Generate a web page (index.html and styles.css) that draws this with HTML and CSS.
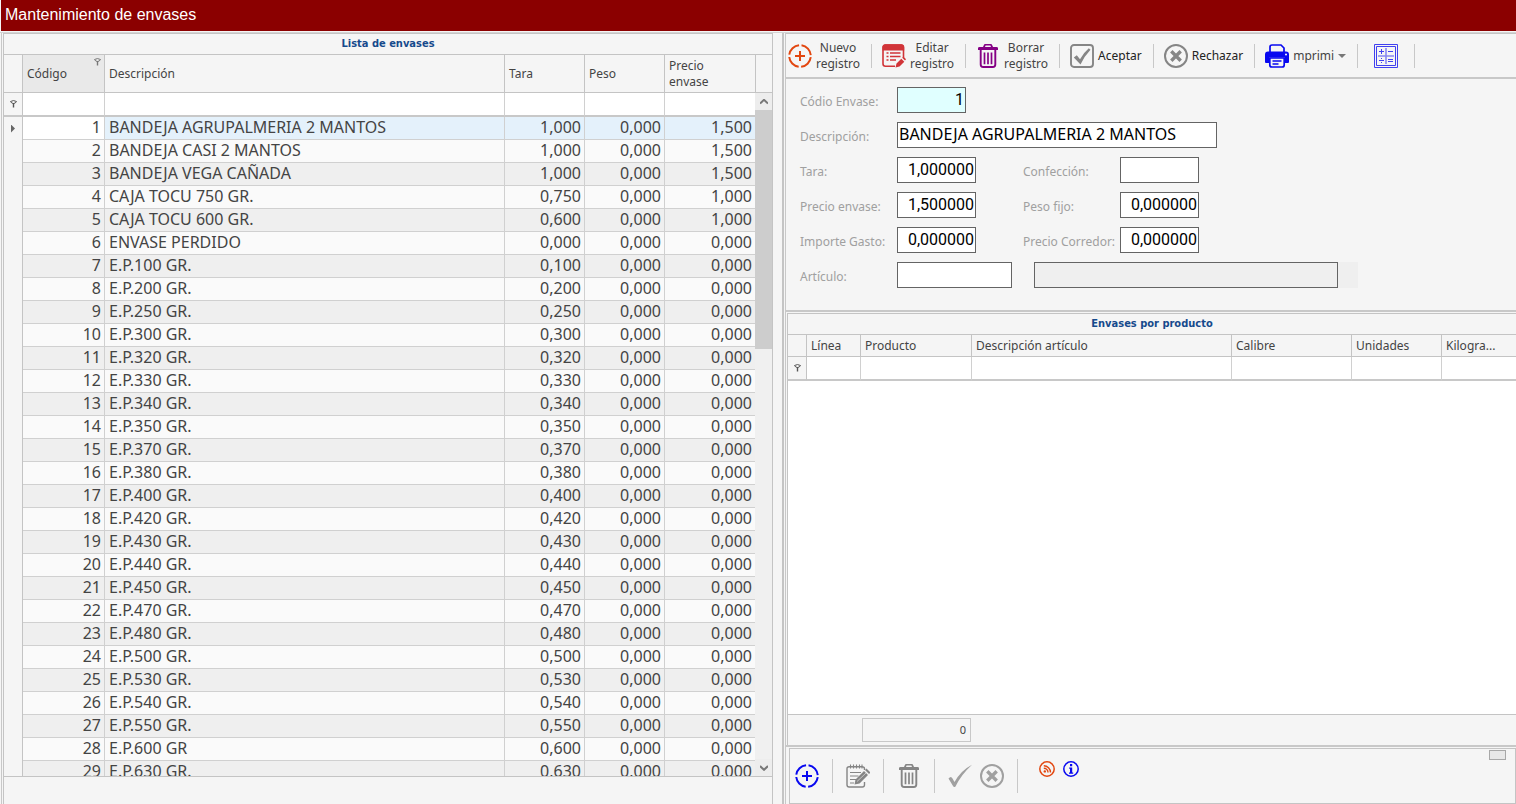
FILE: index.html
```html
<!DOCTYPE html>
<html lang="es">
<head>
<meta charset="utf-8">
<title>Mantenimiento de envases</title>
<link rel="stylesheet" href="styles.css">
</head>
<body>
<svg class="sprite" aria-hidden="true">
  <symbol id="i-add" viewBox="0 0 24 24"><circle cx="12" cy="12" r="10.8" fill="none" stroke="currentColor" stroke-width="2" stroke-dasharray="14.4 2.56" stroke-dashoffset="-1.28"/><path d="M12 7v10M7 12h10" stroke="currentColor" stroke-width="2" fill="none"/></symbol>
  <symbol id="i-edit" viewBox="0 0 24 24"><path d="M13 22.2H3.5A2.5 2.5 0 0 1 1 19.700V3.500A2.500 2.500 0 0 1 3.500 1h15.500A2.500 2.500 0 0 1 21.500 3.500v10" fill="none" stroke="currentColor" stroke-width="1.600"/><path d="M.5 6.500V3a2.800 2.800 0 0 1 2.800-2.800h16A2.800 2.800 0 0 1 22.200 3v3.500z" fill="currentColor"/><path d="M4.500 9h2M8 9h10.500M4.500 12.500h2M8 12.500h10.500M4.500 16h2M8 16h6" stroke="currentColor" stroke-width="1.700"/><path d="M13.500 23.500l1-4 4.800-4.800 3 3-4.800 4.800zM20.200 13.800l1.300-1.300 2.500 2.700-1 1.400z" fill="currentColor"/></symbol>
  <symbol id="i-trash" viewBox="0 0 24 24"><path d="M2 6V4.200Q2 3 3.500 3H7l1-2.300Q8.300 0 9 0h6q.7 0 1 .7L17 3h3.500Q22 3 22 4.200V6zM9 3h6l-.6-1.500H9.600z" fill="currentColor" fill-rule="evenodd"/><path d="M4.700 5v15.500q0 2.500 2.500 2.500h9.600q2.500 0 2.500-2.500V5" fill="none" stroke="currentColor" stroke-width="1.900"/><path d="M8.500 8.500v11.700M12 8.500v11.700M15.500 8.500v11.700" fill="none" stroke="currentColor" stroke-width="1.700"/></symbol>
  <symbol id="i-accept" viewBox="0 0 24 24"><rect x="1" y="1" width="22" height="22" rx="3" fill="none" stroke="currentColor" stroke-width="1.900"/><path d="M3.800 13.500l3-2.300 3.200 4q4-7 8.800-11l1.700 1.600Q14.500 12 10.500 20.500z" fill="currentColor"/></symbol>
  <symbol id="i-reject" viewBox="0 0 24 24"><circle cx="12" cy="12" r="11" fill="none" stroke="currentColor" stroke-width="2"/><path d="M7.300 7.300l9.400 9.400M16.700 7.300l-9.400 9.400" stroke="currentColor" stroke-width="3.400"/></symbol>
  <symbol id="i-print" viewBox="0 0 24 24"><path d="M5 8V3q0-2 2-2h9l3 3v4" fill="none" stroke="currentColor" stroke-width="1.700"/><path d="M0 18V10.500Q0 7.500 3 7.500h18q3 0 3 3V18q0 1-1 1h-3v-5.500H4V19H1q-1 0-1-1z" fill="currentColor"/><path d="M4.800 14v7q0 2 2 2h10.400q2 0 2-2v-7z" fill="#f5f5f5" stroke="currentColor" stroke-width="1.700"/><path d="M7.500 17h9M7.500 20h6" stroke="currentColor" stroke-width="1.500"/><circle cx="21" cy="10.500" r="1" fill="#fff"/></symbol>
  <symbol id="i-calc" viewBox="0 0 24 24"><path d="M.5.500h23v23H.5zM2.500 2.500h19v19h-19z" fill="none" stroke="currentColor" stroke-width="1"/><path d="M12 4v16M4 12h16" stroke="currentColor" stroke-width="1.600" opacity=".6"/><path d="M5 7.500h5M7.500 5v5M14 7.500h5M5 16.500h5M7 14.500h1M7 18.500h1M14 15.500h5M14 17.500h5" stroke="currentColor" stroke-width="1"/></symbol>
  <symbol id="i-note" viewBox="0 0 24 24"><path d="M18.500 18v2.800q0 2.200-2.200 2.200H3.200Q1 23 1 20.800V4.700q0-2 2.200-2h12.600q2.700 0 2.700 2V6" fill="none" stroke="currentColor" stroke-width="1.400"/><path d="M4.500 .5v4M7.500 .5v4M10.500 .5v4M13.500 .5v4M16 .5v4M4 8.500h11M4 12h8.500M4 15.500h6M4 19h4" stroke="currentColor" stroke-width="1.100"/><path d="M8.500 20.500l1-5L18 7l4 4-8.500 8.500zM19 6l1.500-1.500 4 4L23 10z" fill="currentColor"/><path d="M11 17.500L20 9" stroke="#f5f5f5" stroke-width=".6"/></symbol>
  <symbol id="i-check" viewBox="0 0 24 24"><path d="M.5 14.500q2.500-3 4 0l2 3.500Q13 6.500 24 .8 13 11 7.500 22.500q-1.500 1.300-2.500-.5z" fill="currentColor"/></symbol>
  <symbol id="i-rss" viewBox="0 0 16 16"><circle cx="8" cy="8" r="7.200" fill="none" stroke="currentColor" stroke-width="1.500"/><circle cx="5.800" cy="10.400" r="1.200" fill="currentColor"/><path d="M4.800 7.200a4.200 4.200 0 0 1 4.200 4.200M4.800 4.700a6.700 6.700 0 0 1 6.700 6.700" fill="none" stroke="currentColor" stroke-width="1.400"/></symbol>
  <symbol id="i-info" viewBox="0 0 16 16"><circle cx="8" cy="8" r="7.200" fill="none" stroke="currentColor" stroke-width="1.500"/><path d="M7 3h2.200v2.200H7zM6.200 6.500h3v5h1v1.300H6v-1.300h1V7.800h-.8z" fill="currentColor"/></symbol>
  <symbol id="i-filter" viewBox="0 0 7 8"><path d="M.5 1.500Q3.500-.4 6.500 1.500 5.500 3.500 3.500 3.500T.5 1.500z" fill="none" stroke="currentColor" stroke-width="1"/><path d="M3.500 3v4.500" stroke="currentColor" stroke-width="1.400"/></symbol>
</svg>

<header class="titlebar"><h1>Mantenimiento de envases</h1></header>

<main class="workspace">
  <section class="list-panel">
    <div class="list-frame">
      <h2 class="grid-title">Lista de envases</h2>
      <div class="grid-area">
        <div class="table-wrap">
          <table class="grid">
            <colgroup><col class="w-mark"><col class="w-code"><col><col class="w-num"><col class="w-num"><col class="w-price"></colgroup>
            <thead>
              <tr class="head"><th></th><th class="sorted">Código<svg class="head-filter"><use href="#i-filter"/></svg></th><th>Descripción</th><th>Tara</th><th>Peso</th><th>Precio<br>envase</th></tr>
              <tr class="filter"><td class="mark"><svg class="filter-icon"><use href="#i-filter"/></svg></td><td></td><td></td><td></td><td></td><td></td></tr>
            </thead>
            <tbody id="rows"></tbody>
          </table>
        </div>
        <div class="side">
          <div class="side-head"></div>
          <div class="scrollbar">
            <button class="arrow" aria-label="Subir"><svg viewBox="0 0 8 6"><path d="M0 4.600L4 .8l4 3.800" fill="none" stroke="currentColor" stroke-width="2"/></svg></button>
            <div class="thumb"></div>
            <button class="arrow down" aria-label="Bajar"><svg viewBox="0 0 8 6"><path d="M0 1l4 3.800L8 1" fill="none" stroke="currentColor" stroke-width="2"/></svg></button>
          </div>
        </div>
      </div>
      <div class="list-foot"></div>
    </div>
  </section>

  <section class="detail-panel">
    <div class="toolbar">
      <button class="tool"><svg class="icon orange"><use href="#i-add"/></svg><span>Nuevo<br>registro</span></button>
      <button class="tool"><svg class="icon red"><use href="#i-edit"/></svg><span>Editar<br>registro</span></button>
      <button class="tool"><svg class="icon purple"><use href="#i-trash"/></svg><span>Borrar<br>registro</span></button>
      <button class="tool"><svg class="icon gray"><use href="#i-accept"/></svg><span class="dark">Aceptar</span></button>
      <button class="tool"><svg class="icon gray"><use href="#i-reject"/></svg><span class="dark">Rechazar</span></button>
      <button class="tool"><svg class="icon blue"><use href="#i-print"/></svg><span>mprimi</span><i class="caret"></i></button>
      <button class="tool wide" aria-label="Calculadora"><svg class="icon indigo"><use href="#i-calc"/></svg></button>
    </div>

    <form class="form">
      <label for="codigo">Códio Envase:</label><input id="codigo" class="num code" value="1">
      <label for="desc" class="row-start">Descripción:</label><input id="desc" class="long" value="BANDEJA AGRUPALMERIA 2 MANTOS">
      <label for="tara" class="row-start">Tara:</label><input id="tara" class="num" value="1,000000">
      <label for="conf">Confección:</label><input id="conf" class="num">
      <label for="precio">Precio envase:</label><input id="precio" class="num" value="1,500000">
      <label for="peso">Peso fijo:</label><input id="peso" class="num" value="0,000000">
      <label for="gasto">Importe Gasto:</label><input id="gasto" class="num" value="0,000000">
      <label for="corredor">Precio Corredor:</label><input id="corredor" class="num" value="0,000000">
      <label for="articulo">Artículo:</label>
      <div class="article"><input id="articulo" class="article-code"><div class="article-name"><input aria-label="Nombre del artículo" readonly></div></div>
    </form>

    <div class="product-frame">
      <h2 class="grid-title">Envases por producto</h2>
      <table class="grid products">
        <colgroup><col class="w-mark"><col class="w-line"><col class="w-prod"><col><col class="w-cal"><col class="w-unit"><col class="w-kg"></colgroup>
        <thead>
          <tr class="head"><th></th><th>Línea</th><th>Producto</th><th>Descripción artículo</th><th>Calibre</th><th>Unidades</th><th>Kilogra...</th></tr>
          <tr class="filter"><td class="mark"><svg class="filter-icon"><use href="#i-filter"/></svg></td><td></td><td></td><td></td><td></td><td></td><td></td></tr>
        </thead>
      </table>
      <div class="empty"></div>
      <div class="summary"><output>0</output></div>
    </div>

    <div class="bottom-wrap">
      <div class="bottombar">
        <button class="tool" aria-label="Nuevo"><svg class="icon blue"><use href="#i-add"/></svg></button>
        <button class="tool" aria-label="Editar"><svg class="icon gray"><use href="#i-note"/></svg></button>
        <button class="tool" aria-label="Borrar"><svg class="icon gray"><use href="#i-trash"/></svg></button>
        <div class="pair"><button aria-label="Aceptar"><svg class="icon light"><use href="#i-check"/></svg></button><button aria-label="Rechazar"><svg class="icon light"><use href="#i-reject"/></svg></button></div>
        <div class="status"><button aria-label="Novedades"><svg class="small orange"><use href="#i-rss"/></svg></button><button aria-label="Información"><svg class="small blue"><use href="#i-info"/></svg></button></div>
        <button class="mini" aria-label="Opciones"></button>
      </div>
    </div>
  </section>
</main>
<script src="rows.js"></script>
</body>
</html>
```
FILE: styles.css
```css
* { box-sizing: border-box; }
body { margin: 0; height: 100vh; display: flex; flex-direction: column; overflow: hidden; background: #f5f5f5; color: #444; font: 12px/16px "Noto Sans", "Open Sans", sans-serif; }
button { padding: 0; border: 0; background: none; color: inherit; font: inherit; }
svg { display: block; }
.sprite { position: absolute; width: 0; height: 0; }
.titlebar { flex: none; height: 31px; padding-left: 4px; margin-left: 1px; background: #8b0000; color: #fff; }
.titlebar h1 { margin: 0; font: 16px/29px "Liberation Sans", Arial, sans-serif; }
.workspace { flex: 1; min-height: 0; display: grid; grid-template-columns: 784fr 732fr; margin-top: 1px; border-top: 1px solid #d4d4d4; }
.list-panel { min-height: 0; min-width: 0; margin-left: 1px; padding: 0 9px 0 1px; border-left: 1px solid #c8c8c8; border-right: 2px solid #c4c4c4; }
.list-frame { height: 100%; display: flex; flex-direction: column; border: 1px solid #c4c4c4; border-bottom: 0; }
.grid-title { flex: none; height: 21px; margin: 0; border-bottom: 1px solid #c4c4c4; color: #164a8c; text-align: center; font: 700 11px/19px "DejaVu Sans Condensed", "DejaVu Sans", sans-serif; }
.grid-area { flex: 1; min-height: 0; display: flex; }
.table-wrap { flex: 1; min-width: 0; overflow: hidden; }
.grid { width: 100%; table-layout: fixed; border-collapse: separate; border-spacing: 0; }
.w-mark { width: 19px; } .w-code { width: 82px; } .w-num { width: 80px; } .w-price { width: 90px; }
.w-line { width: 54px; } .w-prod { width: 111px; } .w-cal { width: 120px; } .w-unit { width: 90px; } .w-kg { width: 74px; }
.grid th, .grid td { padding: 0 4px; border-right: 1px solid #d0d0d0; border-bottom: 1px solid #d0d0d0; overflow: hidden; white-space: nowrap; }
.grid .head th { height: 38px; border-color: #c4c4c4; text-align: left; font-weight: 400; }
.grid.products .head th { height: 22px; }
.grid .sorted { position: relative; background: #e9e9e9; }
.head-filter { position: absolute; top: 3px; right: 3px; width: 7px; height: 8px; color: #777; }
.grid .filter td { height: 24px; background: #fff; border-bottom: 2px solid #c8c8c8; }
.grid .filter .mark, .grid .mark { padding: 0; background: #f5f5f5; border-right-color: #c4c4c4; }
.grid tbody .mark { border-bottom: 0; }
.filter-icon { width: 7px; height: 8px; margin: 0 auto; color: #555; }
.pointer { width: 4px; height: 8px; margin: 0 auto; background: #666; clip-path: polygon(0 0, 100% 50%, 0 100%); }
.grid tbody td { height: 23px; padding: 0 3px 2px 4px; font-size: 16px; line-height: 20px; background: #fafafa; }
.grid tbody tr:nth-child(odd) td { background: #efefef; }
.grid tbody tr td.n { text-align: right; }
.grid tbody tr:first-child td { background: #e4f1fb; }
.grid tbody tr:first-child td.code { background: #fff; }
.grid tbody tr td.mark { background: #f5f5f5; padding: 0; }
.grid tr > :last-child { border-right: 0; }
.side { width: 17px; display: flex; flex-direction: column; }
.side-head { height: 38px; border-left: 1px solid #c4c4c4; border-bottom: 1px solid #c4c4c4; }
.scrollbar { flex: 1; display: flex; flex-direction: column; background: #f0f0f0; }
.arrow { height: 17px; display: grid; place-items: center; color: #777; background: #ededed; }
.arrow svg { width: 8px; height: 6px; }
.thumb { height: 35%; background: #cdcdcd; }
.down { margin-top: auto; }
.list-foot { flex: none; height: 28px; border-top: 1px solid #c4c4c4; }

.detail-panel { min-width: 0; min-height: 0; display: flex; flex-direction: column; margin-left: 1px; border-left: 1px solid #c8c8c8; }
.toolbar { flex: none; height: 46px; display: flex; align-items: center; padding: 0 2px; border-top: 1px solid #c4c4c4; border-bottom: 2px solid #c8c8c8; }
.tool { display: flex; align-items: center; gap: 4px; padding: 0 11px 0 10px; }
.toolbar .tool { height: 24px; border-right: 1px solid #c8c8c8; }
.toolbar .tool:first-child { padding-left: 0; }
.toolbar .wide { padding: 0 16px; }
.dark { color: #222; }
.icon { flex: none; width: 24px; height: 24px; overflow: visible; }
.small { width: 16px; height: 16px; }
.orange { color: #e2460f; } .red { color: #d13438; } .purple { color: #850085; } .gray { color: #858585; } .light { color: #a0a0a0; } .blue { color: #0808f0; } .indigo { color: #4040f0; }
.caret { border: 4px solid transparent; border-top-color: #777; border-bottom: 0; }
.form { flex: none; display: grid; grid-template-columns: 97px 126px 97px 1fr; grid-auto-rows: 26px; row-gap: 9px; align-items: center; height: 233px; padding: 8px 14px 0; border-bottom: 2px solid #c8c8c8; align-content: start; }
.form label { padding-top: 3px; color: #a0a0a0; }
.form .row-start { grid-column: 1; }
.form input { width: 79px; height: 26px; padding: 0 1px 2px; border: 1px solid #646464; border-radius: 0; background: #fff; color: #000; font: 16px "Noto Sans", sans-serif; }
.form .num { text-align: right; font: 16px Roboto, sans-serif; }
.form .code { width: 69px; background: #e0ffff; }
.form .long { width: 320px; grid-column: 2 / -1; }
.article { grid-column: 2 / -1; display: flex; gap: 22px; }
.form .article-code { width: 115px; }
.article-name { width: 324px; background: #efefef; }
.form .article-name input { display: block; width: 304px; background: #efefef; }
.product-frame { flex: 1; min-height: 0; display: flex; flex-direction: column; margin: 1px 0 0 1px; border: 1px solid #c4c4c4; border-right: 0; border-bottom: 0; }
.empty { flex: 1; background: #fff; }
.summary { flex: none; height: 31px; padding: 3px 0 0 74px; border-top: 1px solid #c4c4c4; }
.summary output { display: block; width: 109px; height: 24px; padding-right: 4px; border: 1px solid #c8c8c8; text-align: right; font-size: 11px; line-height: 22px; }
.bottom-wrap { flex: none; padding: 1px 0 0 3px; border-top: 2px solid #c8c8c8; }
.bottombar { height: 56px; display: flex; align-items: center; padding-left: 5px; border: 1px solid #c4c4c4; }
.bottombar > .tool, .pair { height: 34px; padding: 0 13px; border-right: 1px solid #c8c8c8; }
.bottombar > .tool:first-child { padding-left: 0; }
.pair { display: flex; align-items: center; gap: 8px; }
.status { display: flex; align-self: flex-start; gap: 8px; margin: 12px 0 0 21px; }
.mini { width: 17px; height: 10px; margin: 1px 9px 0 auto; align-self: flex-start; border: 1px solid #a8a8a8; background: #e8e8e8; }
```
FILE: rows.js
```js
const envases = [
  ["BANDEJA AGRUPALMERIA 2 MANTOS", "1,000", "1,500"],
  ["BANDEJA CASI 2 MANTOS", "1,000", "1,500"],
  ["BANDEJA VEGA CAÑADA", "1,000", "1,500"],
  ["CAJA TOCU 750 GR.", "0,750", "1,000"],
  ["CAJA TOCU 600 GR.", "0,600", "1,000"],
  ["ENVASE PERDIDO", "0,000", "0,000"],
  ...[100, 200, 250, 300, 320, 330, 340, 350, 370, 380, 400, 420, 430, 440, 450, 470, 480, 500, 530, 540, 550, 600, 630]
    .map(g => [`E.P.${g} GR${g === 600 ? "" : "."}`, `0,${g}`, "0,000"])
];
document.getElementById("rows").innerHTML = envases.map(([name, tara, price], i) =>
  `<tr><td class="mark">${i ? "" : '<div class="pointer"></div>'}</td><td class="n code">${i + 1}</td><td>${name}</td><td class="n">${tara}</td><td class="n">0,000</td><td class="n">${price}</td></tr>`
).join("");
```
